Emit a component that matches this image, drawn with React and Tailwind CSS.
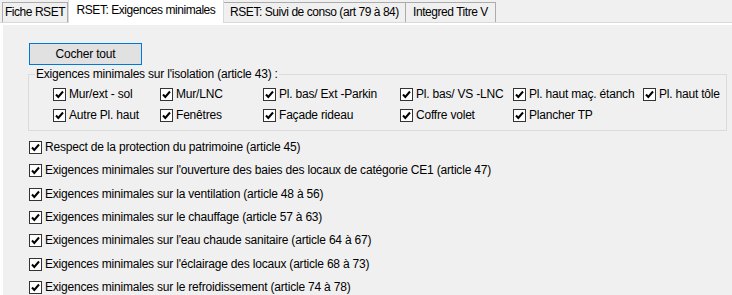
import React from "react";

const Check = () => (
  <span className="w-[13px] h-[13px] shrink-0 border border-[#333333] bg-white flex items-center justify-center">
    <svg width="11" height="11" viewBox="0 0 11 11">
      <path d="M2 5.5 L4.3 8 L9 2.5" fill="none" stroke="#000" strokeWidth="2" />
    </svg>
  </span>
);

const Item = ({ label }) => (
  <div className="flex items-center gap-[3px] whitespace-nowrap">
    <Check />
    <span>{label}</span>
  </div>
);

const tabs = [
  { label: "Fiche RSET", w: "w-[66px]" },
  { label: "RSET: Exigences minimales", w: "w-[156px]", active: true },
  { label: "RSET: Suivi de conso (art 79 à 84)", w: "w-[183px]" },
  { label: "Integred Titre V", w: "w-[91px]" },
];

const isolation = [
  "Mur/ext - sol",
  "Mur/LNC",
  "Pl. bas/ Ext -Parkin",
  "Pl. bas/ VS -LNC",
  "Pl. haut maç. étanch",
  "Pl. haut tôle",
  "Autre Pl. haut",
  "Fenêtres",
  "Façade rideau",
  "Coffre volet",
  "Plancher TP",
];

const lines = [
  "Respect de la protection du patrimoine (article 45)",
  "Exigences minimales sur l'ouverture des baies des locaux de catégorie CE1 (article 47)",
  "Exigences minimales sur la ventilation (article 48 à 56)",
  "Exigences minimales sur le chauffage (article 57 à 63)",
  "Exigences minimales sur l'eau chaude sanitaire (article 64 à 67)",
  "Exigences minimales sur l'éclairage des locaux (article 68 à 73)",
  "Exigences minimales sur le refroidissement (article 74 à 78)",
];

export default function App() {
  return (
    <div className="w-[732px] h-[295px] overflow-hidden bg-[#f0f0f0] text-[12px] leading-[15px] tracking-[-0.2px] text-black font-['Liberation_Sans',Arial,sans-serif]">
      {/* Tabs */}
      <div className="h-[23px] flex items-end pl-[2px] border-b border-[#d9d9d9] tracking-[-0.45px]">
        {tabs.map((t) =>
          t.active ? (
            <div
              key={t.label}
              className={`${t.w} h-[24px] -mb-px bg-white border border-b-0 border-[#d9d9d9] flex justify-center pt-[3px] whitespace-nowrap relative z-10`}
            >
              {t.label}
            </div>
          ) : (
            <div
              key={t.label}
              className={`${t.w} h-[20px] -ml-px first:ml-0 bg-[#f0f0f0] border border-b-0 border-[#acacac] flex justify-center pt-[2px] whitespace-nowrap`}
            >
              {t.label}
            </div>
          )
        )}
      </div>

      {/* Page */}
      <div className="bg-white pt-[2px] pl-[3px] h-full">
        <div className="bg-[#f0f0f0] h-full pt-[18px]">
          <button className="ml-[26px] w-[113px] h-[22px] bg-[#e1e1e1] border border-[#0078d7] block">
            Cocher tout
          </button>

          <fieldset className="ml-[25px] mr-[6px] mt-[2px] border border-[#dcdcdc] px-[6px] pb-[4px]">
            <legend className="px-[1px]">Exigences minimales sur l'isolation (article 43) :</legend>
            <div className="grid grid-cols-[107px_103px_137px_113px_130px_1fr] pl-[18px] pt-[2px]">
              {isolation.map((l) => (
                <div key={l} className="h-[21px] flex items-center">
                  <Item label={l} />
                </div>
              ))}
            </div>
          </fieldset>

          <div className="pl-[26px] mt-[5px]">
            {lines.map((l) => (
              <div key={l} className="h-[23.33px] flex items-center">
                <Item label={l} />
              </div>
            ))}
          </div>
        </div>
      </div>
    </div>
  );
}
